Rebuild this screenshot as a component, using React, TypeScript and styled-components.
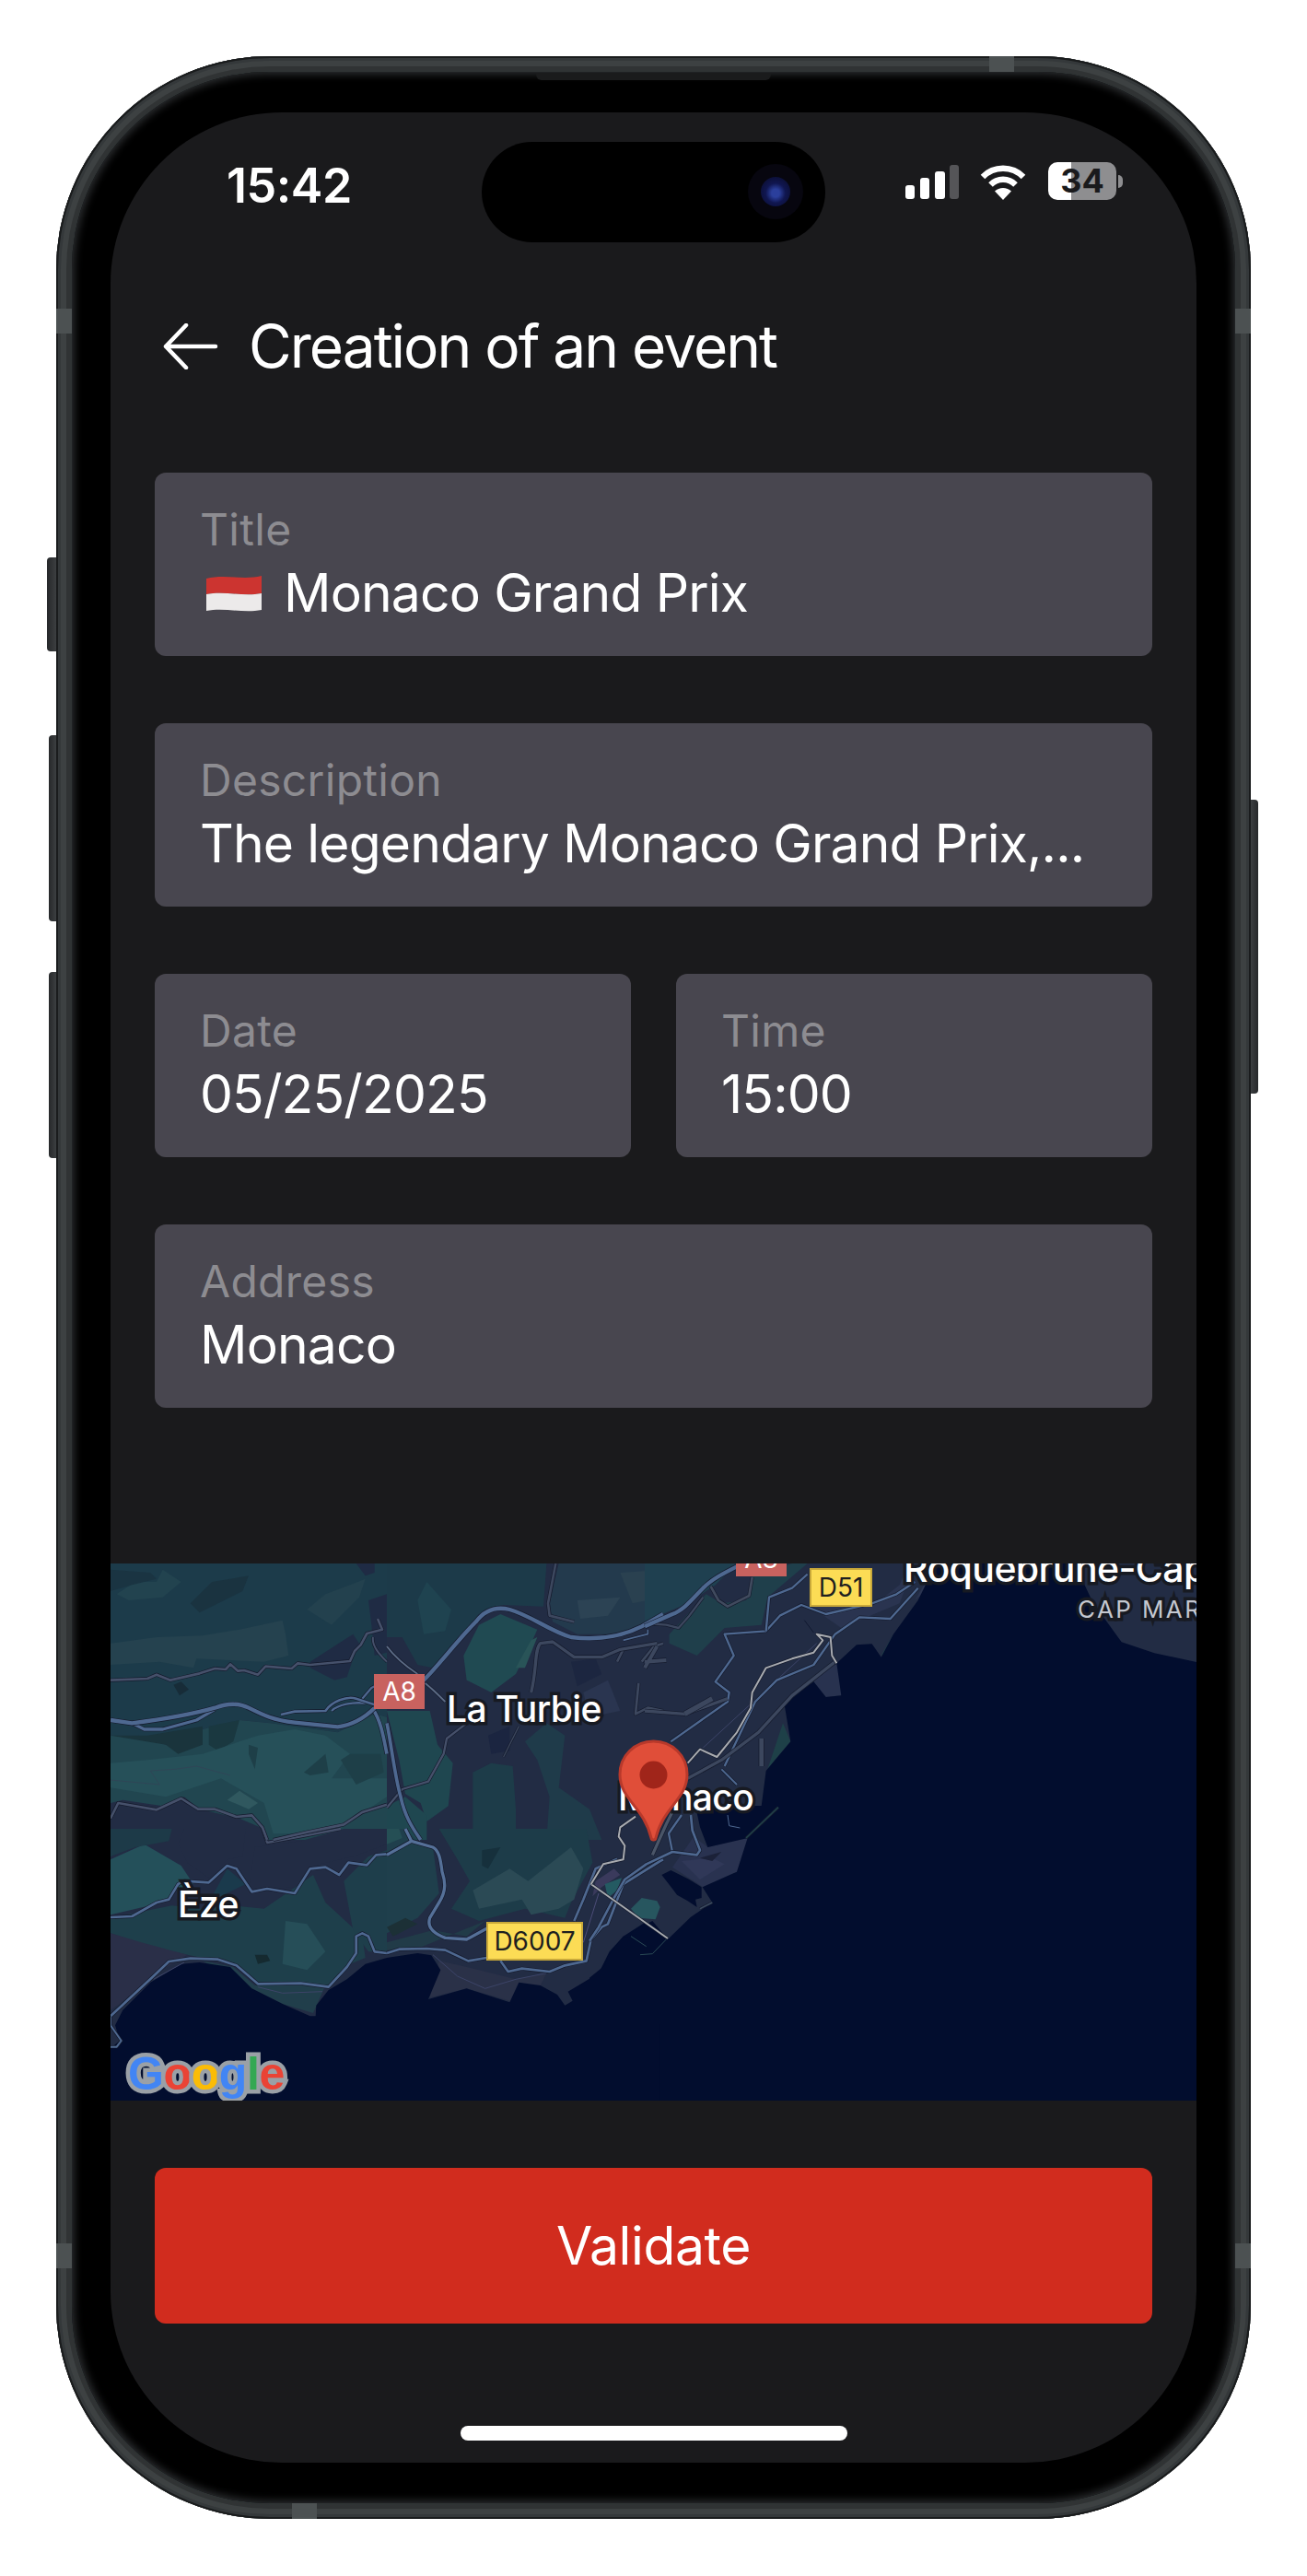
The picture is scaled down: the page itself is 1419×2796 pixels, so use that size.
import React from "react";
import styled, { createGlobalStyle } from "styled-components";

const Global = createGlobalStyle`
	html, body {
		margin: 0;
		padding: 0;
		background: #ffffff;
	}
	* {
		box-sizing: border-box;
	}
`;

const Page = styled.div`
	width: 1419px;
	height: 2796px;
	padding: 61px 61px 0;
	font-family: Inter, "Liberation Sans", sans-serif;
	overflow: hidden;
`;

const Phone = styled.div`
	position: relative;
	width: 1297px;
	height: 2673px;
	padding: 17px;
	border-radius: 232px;
	background: #2f3334;
	box-shadow: inset 0 0 0 2px #1a1c1d, inset 0 0 0 5px #34383a, inset 0 0 0 11px #3d4142, inset 0 0 0 15px #303334;
`;

const Bezel = styled.div`
	height: 100%;
	padding: 44px 42px;
	border-radius: 214px;
	background: #000000;
	box-shadow: inset 0 0 0 1px #1f2123, inset 0 0 9px 3px #2a2c2e;
`;

const SideButton = styled.span<{ $side: "left" | "right"; $top: number; $height: number; $width: number }>`
	position: absolute;
	top: ${(p) => p.$top}px;
	${(p) => p.$side}: -${(p) => p.$width}px;
	width: ${(p) => p.$width}px;
	height: ${(p) => p.$height}px;
	background: linear-gradient(${(p) => (p.$side === "left" ? "90deg" : "270deg")}, #26282a, #3c3f41);
	border-radius: ${(p) => (p.$side === "left" ? "4px 0 0 4px" : "0 4px 4px 0")};
`;

const Band = styled.span<{ $x: number; $y: number; $w: number; $h: number }>`
	position: absolute;
	left: ${(p) => p.$x}px;
	top: ${(p) => p.$y}px;
	width: ${(p) => p.$w}px;
	height: ${(p) => p.$h}px;
	background: #4c5152;
`;

const Speaker = styled.span`
	position: absolute;
	left: 521px;
	top: 18px;
	width: 255px;
	height: 8px;
	background: #1a1b1c;
	border-radius: 0 0 6px 6px;
`;

const Screen = styled.div`
	position: relative;
	height: 100%;
	display: flex;
	flex-direction: column;
	border-radius: 186px;
	background: #1a1a1c;
	overflow: hidden;
	color: #ffffff;
`;

const StatusBar = styled.div`
	height: 140px;
	padding: 57px 87px 0 126px;
	display: flex;
	justify-content: space-between;
	align-items: flex-start;
`;

const Clock = styled.span`
	font-size: 52px;
	line-height: 46px;
	font-weight: 600;
	letter-spacing: -0.5px;
`;

const StatusIcons = styled.div`
	display: flex;
	align-items: flex-start;
`;

const Battery = styled.div`
	position: relative;
	width: 74px;
	height: 41px;
	margin-left: 24px;
	margin-top: -3px;
	border-radius: 10px;
	background: linear-gradient(90deg, #ffffff 34%, #8e8e90 34%);
	color: #1a1a1c;
	font-size: 36px;
	line-height: 41px;
	font-weight: 700;
	text-align: center;
	&::after {
		content: "";
		position: absolute;
		left: 76px;
		top: 14px;
		width: 5px;
		height: 14px;
		border-radius: 0 6px 6px 0;
		background: #8e8e90;
	}
`;

const Island = styled.div`
	position: absolute;
	left: 403px;
	top: 32px;
	width: 373px;
	height: 109px;
	border-radius: 55px;
	background: #000000;
`;

const CameraRing = styled.span`
	position: absolute;
	right: 24px;
	top: 24px;
	width: 60px;
	height: 60px;
	border-radius: 50%;
	background: #07060f;
`;

const CameraLens = styled.span`
	position: absolute;
	left: 14px;
	top: 14px;
	width: 32px;
	height: 32px;
	border-radius: 50%;
	background: radial-gradient(circle at 50% 55%, #2b3f9c 0 18%, #101650 45%, #080a24 100%);
`;

const Header = styled.div`
	height: 100px;
	margin-top: 64px;
	padding-left: 57px;
	display: flex;
	align-items: center;
	gap: 33px;
`;

const HeaderTitle = styled.h1`
	margin: 0;
	font-size: 64px;
	line-height: 100px;
	font-weight: 400;
	letter-spacing: -2px;
`;

const Form = styled.div`
	margin-top: 87px;
	padding: 0 48px;
	display: flex;
	flex-direction: column;
	gap: 73px;
`;

const Field = styled.div`
	height: 199px;
	padding: 33px 30px 0 49px;
	border-radius: 12px;
	background: #48464f;
`;

const FieldLabel = styled.div`
	height: 64px;
	font-size: 48px;
	line-height: 58px;
	letter-spacing: 0.3px;
	color: #8d8c91;
`;

const FieldValue = styled.div`
	display: flex;
	align-items: center;
	gap: 24px;
	font-size: 57px;
	line-height: 68px;
	letter-spacing: -0.85px;
	color: #ffffff;
	white-space: nowrap;
`;

const FlagBox = styled.svg`
	flex: none;
	margin-left: 7px;
`;

const FieldRow = styled.div`
	display: grid;
	grid-template-columns: 1fr 1fr;
	gap: 49px;
`;

const MapArea = styled.div`
	position: relative;
	flex: none;
	height: 583px;
	margin-top: 169px;
	overflow: hidden;
	background: #020d2e;
`;

const MapDrawing = styled.svg`
	display: block;
	width: 100%;
	height: 100%;
`;

const MapPlace = styled.span<{ $x: number; $y: number; $size?: number; $small?: boolean }>`
	position: absolute;
	left: ${(p) => p.$x}px;
	top: ${(p) => p.$y}px;
	font-size: ${(p) => (p.$small ? 26 : p.$size ?? 39)}px;
	line-height: 46px;
	font-weight: ${(p) => (p.$small ? 400 : 500)};
	letter-spacing: ${(p) => (p.$small ? 2.4 : -0.6)}px;
	color: ${(p) => (p.$small ? "#c4c8d0" : "#ffffff")};
	white-space: nowrap;
	-webkit-text-stroke: 7px #171a22;
	paint-order: stroke fill;
`;

const RoadSign = styled.span<{ $x: number; $y: number; $w: number; $h: number; $kind: "motorway" | "dept" }>`
	position: absolute;
	left: ${(p) => p.$x}px;
	top: ${(p) => p.$y}px;
	width: ${(p) => p.$w}px;
	height: ${(p) => p.$h}px;
	display: flex;
	align-items: center;
	justify-content: center;
	font-size: 28px;
	background: ${(p) => (p.$kind === "motorway" ? "#c8625f" : "#fcdc55")};
	border: ${(p) => (p.$kind === "motorway" ? "0" : "2px solid #c9a93a")};
	color: ${(p) => (p.$kind === "motorway" ? "#ffffff" : "#1f1f1f")};
`;

const Pin = styled.svg`
	position: absolute;
	left: 551px;
	top: 191px;
	width: 77px;
	height: 111px;
`;

const GoogleLogo = styled.div`
	position: absolute;
	left: 19px;
	top: 524px;
	font-family: "Liberation Sans", Arial, sans-serif;
	font-size: 50px;
	line-height: 60px;
	font-weight: 700;
	letter-spacing: -0.4px;
	-webkit-text-stroke: 9px #9aa0a6;
	paint-order: stroke fill;
`;

const GoogleLetter = styled.span<{ $color: string }>`
	color: ${(p) => p.$color};
`;

const Footer = styled.div`
	margin-top: 73px;
	padding: 0 48px;
`;

const ValidateButton = styled.button`
	display: block;
	width: 100%;
	height: 169px;
	border: 0;
	border-radius: 12px;
	background: #d12c1e;
	color: #ffffff;
	font-family: inherit;
	font-size: 57px;
	font-weight: 400;
	letter-spacing: -0.4px;
`;

const HomeBar = styled.div`
	width: 420px;
	height: 16px;
	margin: 111px auto 0;
	border-radius: 8px;
	background: #ffffff;
`;

const BackArrow = () => (
	<svg width="60" height="50" viewBox="0 0 60 50" fill="none" stroke="#fff" strokeWidth="4.5" strokeLinecap="round" strokeLinejoin="round">
		<path d="M57 25H3M25 2 3 25l22 23" />
	</svg>
);

const SignalIcon = () => (
	<svg width="58" height="37" viewBox="0 0 58 37">
		<rect x="0" y="22" width="10" height="15" rx="3" fill="#fff" />
		<rect x="16" y="14" width="10" height="23" rx="3" fill="#fff" />
		<rect x="32" y="7" width="11" height="30" rx="3" fill="#fff" />
		<rect x="48" y="0" width="10" height="37" rx="3" fill="#555558" />
	</svg>
);

const WifiSvg = styled.svg`
	margin-left: 23px;
`;

const WifiIcon = () => (
	<WifiSvg width="50" height="38" viewBox="0 0 50 38">
		<path d="M3 13a31 31 0 0 1 44 0" fill="none" stroke="#fff" strokeWidth="6.5" />
		<path d="M11.5 21.5a19 19 0 0 1 27 0" fill="none" stroke="#fff" strokeWidth="6.5" />
		<path d="M25 38 16 28.5a13 13 0 0 1 18 0Z" fill="#fff" />
	</WifiSvg>
);

const MonacoFlag = () => (
	<FlagBox width="60" height="44" viewBox="0 0 60 44">
		<path d="M0 6c20-5 40 2 60-3v19c-20 4-40-3-60 1Z" fill="#cc3430" />
		<path d="M0 23c20-4 40 3 60-1v18c-20 4-40-3-60 1Z" fill="#eceaea" />
	</FlagBox>
);

// every shape below is written in the 3x coords of a crop of the map, dx/dy move it in place
const NAVY = "#222c44";
const ROAD = "#4e6890";
const MINOR = "#45506a";
const SOFT = "#3c475e";
const LIGHT = "#a8abb0";
const THIN = "#3c4468";

type Patch = [string, string];
type Road = [string, string, number];
type Crop = { dx: number; dy: number; patches: Patch[]; roads: Road[] };

const crops: Crop[] = [
	{
		dx: 900,
		dy: 0,
		patches: [
			["0,0 520,0 510,140 380,135 320,150 240,230 150,340 100,330 50,240 0,240", "#1c3a49"],
			["130,60 210,150 190,220 120,230 100,120", "#1f4350"],
			["560,0 900,0 900,160 790,230 620,230 540,190 530,130", "#233a4d"],
			["620,120 760,110 720,170 630,180", "#2c4354"],
			["760,30 900,20 900,110 800,130", "#2a4150"],
			["250,300 300,200 370,165 490,215 470,260 420,360 340,420 260,380", "#204a52"],
			["420,340 470,250 490,240 450,340", "#295458"],
			["0,480 140,480 165,590 215,650 200,790 130,840 110,780 60,750 40,640", "#1f4750"],
			["0,790 60,760 130,820 130,900 0,900", "#1f4750"],
			["280,900 280,680 340,650 410,660 420,800 420,900", "#1d3c49"],
			["450,580 520,520 580,560 560,730 660,800 700,900 520,900 530,760 490,640", "#1f3b4a"],
			["640,420 720,380 760,480 660,500", "#2a3550"],
			["330,560 400,530 400,610 340,620", "#1b2540"],
			["600,320 680,310 700,360 620,400", "#1c2640"],
		],
		roads: [
			["M120 380C170 330 230 250 290 190 320 150 360 140 400 150 470 170 530 220 600 240 680 250 760 240 830 205L900 165", ROAD, 13],
			["M0 520C15 590 25 690 45 760 60 830 90 870 110 900", ROAD, 11],
			["M550 0 525 130 530 170 610 190", SOFT, 8],
			["M0 270C30 310 70 340 100 360M125 390C150 410 170 430 190 450", "#5c6b85", 6],
			["M0 795 50 735 135 710 185 620 195 570 260 520", MINOR, 7],
			["M470 420C490 340 480 280 500 260L540 255 610 305 700 305 760 280 880 260", SOFT, 10],
			["M750 320 770 280M830 320 870 270 900 260M820 390 810 490 850 470 900 480", SOFT, 8],
			["M380 630 430 530", SOFT, 4],
			["M770 250 850 230 850 215", ROAD, 5],
		],
	},
	{
		dx: 0,
		dy: 0,
		patches: [
			["0,0 900,0 900,500 860,490 740,550 520,520 420,510 300,540 180,590 90,560 0,560", "#1c3b4a"],
			["0,260 150,240 300,235 420,215 560,185 570,230 580,300 500,320 280,310 270,340 160,320 0,330", "#25424f"],
			["20,100 80,60 150,60 170,20 230,60 170,110 60,120", "#22434f"],
			["640,150 700,100 780,70 830,50 810,110 720,200", "#23414e"],
			["260,130 330,60 450,40 430,90 290,160", "#1a3340"],
			["0,20 130,30 150,50 70,70 0,90", "#1a3442"],
			["650,320 790,230 810,260 790,310 770,370 730,380 650,340", "#1f2b44"],
			["800,0 860,0 860,30 830,40", "#1f2b44"],
			["840,120 900,100 900,290 860,300 850,200", "#1f2b44"],
			["205,395 230,385 255,410 225,430", "#172c38"],
			["0,560 90,560 180,590 300,540 420,510 520,520 740,550 860,490 900,500 900,900 0,900", "#214650"],
			["0,560 180,590 220,620 300,590 300,530 120,560", "#1a343c"],
			["320,530 420,510 400,580 350,610 320,590", "#1a3840"],
			["0,650 120,640 300,620 480,560 600,540 700,560 780,620 720,700 900,700 900,760 720,880 530,880 500,780 360,700 180,760 0,730", "#265059"],
			["380,770 420,740 480,780 450,800", "#30585f"],
			["630,680 700,620 710,680 650,690", "#1e3f48"],
			["450,590 480,600 470,670 450,620", "#1e3f48"],
			["750,640 780,620 880,620 890,680 800,720", "#1e3f48"],
			["0,780 40,770 170,790 240,760 290,800 420,830 490,860 510,900 0,900", NAVY],
		],
		roads: [
			["M0 510 70 520C150 510 270 490 340 470 380 455 420 455 450 470 500 495 530 510 600 518L740 532C790 525 830 500 860 470", ROAD, 13],
			["M70 520 110 540 170 540 280 510 340 475", ROAD, 10],
			["M555 492 600 482 700 480C720 450 770 430 800 440L860 460", ROAD, 8],
			["M720 480C740 460 790 450 830 455M820 440 850 405 860 400", ROAD, 7],
			["M855 475C880 510 890 570 900 620", ROAD, 11],
			["M0 380 120 375 150 362 195 380 290 358 340 342 375 345 390 328 415 350 435 348 480 362 505 335 590 342 610 325 650 330 780 318 795 285 815 265 835 228 885 215 870 180", MINOR, 8],
			["M855 240C850 270 880 300 900 320", MINOR, 6],
			["M0 830 25 780 150 802 230 765 285 800 340 800 410 825 460 820 495 860 510 900", MINOR, 8],
			["M530 900 640 875 760 850 820 810 900 785", MINOR, 8],
			["M130 675 210 670 280 660 390 690M130 675 160 720 0 705", "#2f4657", 3],
		],
	},
	{
		dx: 0,
		dy: 864,
		patches: [
			["0,100 110,50 230,120 270,180 210,200 170,240 0,280", "#24505a"],
			["0,290 200,250 290,260 400,250 500,260 660,150 700,240 820,350 830,420 780,440 710,510 470,500 400,440 250,410 120,380 0,340", "#1e3f4b"],
			["570,300 640,310 700,400 640,460 560,440", "#264e58"],
			["240,0 440,0 430,90 380,100 320,160 250,110 220,50", NAVY],
			["0,0 200,0 190,40 80,60 0,90", "#1d3a48"],
			["470,60 620,40 760,0 900,0 900,50 790,90 660,120 600,190 450,200", NAVY],
			["760,170 840,90 900,70 900,400 840,400 790,330", "#1e3e4b"],
			["0,340 100,370 250,410 150,470 30,570 0,590", "#2a2f48"],
			["300,430 400,450 470,510 700,510 660,600 560,570 460,520", "#213e4b"],
			["470,410 510,410 520,430 480,440", "#152a30"],
			["380,130 440,180 320,240", "#1a3a4c"],
		],
		roads: [
			["M0 288 70 285 150 240 190 230 220 180 240 170 320 175 380 120 410 130 460 205 510 195 600 210 650 130 700 125 745 150 775 110 835 118 865 85 900 82", ROAD, 8],
			["M0 610 150 470 190 432 260 422 350 425 410 445 480 505 620 503 710 515 770 450 800 405 800 350 820 340 840 350 860 400 900 405", ROAD, 8],
			["M0 610 0 640 35 690 20 710 0 710", ROAD, 6],
			["M495 0 510 45 620 25 750 0", MINOR, 7],
			["M140 490 240 435M480 515 560 535 690 530", THIN, 3],
		],
	},
	{
		dx: 900,
		dy: 864,
		patches: [
			["170,0 400,0 500,0 650,0 670,110 600,240 580,290 450,260 300,300 210,260 270,170 230,100", "#1d3c49"],
			["280,200 400,130 460,170 600,60 640,130 610,230 560,260 470,280 440,230 300,260", "#2b4a55"],
			["0,0 60,0 100,40 150,60 170,210 100,290 0,340", "#1f3f4c"],
			["0,320 60,290 100,310 20,350", "#1c3036"],
			["0,370 150,330 260,350 320,300 100,390 0,395", "#213b48"],
			["0,0 40,0 50,30 0,50", "#254f55"],
			["310,70 370,60 330,130 310,120", "#16303c"],
			["680,170 740,130 760,150 700,190 670,220", "#3a3a5c"],
			["710,180 765,160 750,200 720,225", "#245a62"],
			["170,430 260,450 420,490 520,470 500,510 400,560 260,520 140,550", "#2a3148"],
		],
		roads: [
			["M0 85 80 40 60 0M80 40 150 60C170 70 175 100 180 140 190 170 195 200 170 240L140 290C130 320 150 340 190 355L260 360 325 325", "#557098", 10],
			["M0 405 40 392 130 390 190 395 265 430 325 420", ROAD, 8],
			["M370 430 395 465 440 455 530 465 580 445 650 430 665 360 700 320 720 310 770 180 890 105 900 100", ROAD, 8],
			["M610 300 640 230 680 130 750 98", ROAD, 8],
			["M150 410 230 480 320 520 420 490 520 470", THIN, 3],
			["M640 370 690 210", "#4c4c78", 3],
		],
	},
	{
		dx: 1740,
		dy: 0,
		patches: [
			["0,0 300,0 230,70 140,130 0,190", "#1f4050"],
			["80,230 200,100 250,130 330,120 350,40 480,0 530,0 400,110 380,200 260,210 170,300 80,260", "#1f3f4b"],
			["540,140 740,140 830,70 860,0 880,0 830,130 640,210", "#2a3450"],
			["400,670 430,580 450,520 475,580 440,620", "#1e4048"],
			["770,300 810,230 790,290", "#1e4048"],
			["550,385 610,330 630,330 640,430 590,435", "#28324f"],
			["880,120 950,0 949,60", "#2a3450"],
		],
		roads: [
			["M0 480 130 490 270 440", SOFT, 10],
			["M130 490 220 440", SOFT, 16],
			["M0 340 40 270M0 320 70 315", SOFT, 12],
			["M140 700 250 640 370 550 480 430 620 320", SOFT, 10],
			["M380 570 380 660", SOFT, 14],
			["M0 205 90 165C130 150 160 110 190 80 220 50 260 30 300 10L340 0", ROAD, 13],
			["M215 75 240 120 270 140 340 105 350 45", "#404a5e", 8],
			["M0 195 70 200 110 210 145 170 190 110", SOFT, 7],
			["M85 580 270 450 275 420 230 385 290 300 260 230 395 220 440 170 510 135 590 165 740 130 820 100 880 60", ROAD, 7],
			["M395 220 405 110 480 80 530 35", ROAD, 7],
			["M260 660 360 450 430 380 550 330 620 230 700 175 800 180 890 80", ROAD, 7],
			["M250 670 300 720", ROAD, 6],
			["M520 185 550 225", "#101830", 3],
			["M190 600 560 260", THIN, 3],
			["M140 650 180 605 235 630 300 550 345 470 350 420 395 340 480 310 550 290 580 250 560 230 605 240 610 300 625 325", LIGHT, 6],
		],
	},
	{
		dx: 1560,
		dy: 789,
		patches: [
			["385,135 515,105 480,215 370,265 270,200 340,100", "#293250"],
			["300,180 400,170 440,190 360,240", "#303858"],
			["360,170 430,150 400,180", "#1b2138"],
			["135,335 170,300 220,310 230,330 215,370 160,365", "#27565f"],
		],
		roads: [
			["M0 440 30 395 80 300 115 240 185 190 270 150 350 160 360 145 335 80 330 30", ROAD, 8],
			["M270 150 258 90 300 30", ROAD, 7],
			["M205 160 250 60 270 20", "#4a5568", 10],
			["M135 425 185 458M165 485 205 482 250 435", "#2a4a55", 3],
			["M400 315 360 335", "#3a4a60", 5],
			["M510 105 615 5", "#1f3f48", 5],
			["M450 30 455 65 490 72", ROAD, 3],
			["M5 255 255 432", LIGHT, 6],
			["M5 255 45 190 110 175 115 130 95 100 100 70 150 35", LIGHT, 6],
		],
	},
];

const seas: { dx: number; dy: number; points: string }[] = [
	{
		dx: 0,
		dy: 864,
		points: "0,715 30,690 15,640 40,590 130,500 230,440 290,435 390,450 460,520 560,570 650,610 668,610 670,575 710,525 770,490 830,440 900,420 900,900 0,900",
	},
	{
		dx: 900,
		dy: 864,
		points: "0,420 100,405 145,412 175,460 135,555 260,520 400,565 430,500 500,510 555,540 580,575 605,560 590,530 690,470 725,400 770,350 840,305 900,350 900,900 0,900",
	},
	{
		dx: 1740,
		dy: 0,
		points: "949,0 1400,0 1459,126 1553,256 1660,292 1797,321 1797,1749 300,1749 380,790 395,675 475,580 455,460 510,415 550,385 590,435 640,430 625,325 690,265 740,262 770,305 810,230 890,120",
	},
	{
		dx: 1560,
		dy: 789,
		points: "0,560 50,520 60,490 110,425 130,430 140,410 205,375 255,435 330,362 400,315 368,265 480,215 515,105 385,135 360,70 345,0 720,0 720,720 0,720",
	},
	{
		dx: 1560,
		dy: 789,
		points: "235,225 265,210 325,240 365,265 365,300 345,305 350,330 320,310 285,290 270,270",
	},
	{
		dx: 0,
		dy: 0,
		points: "1790,1500 2100,1500 2100,1749 1790,1749",
	},
];

const allRoads = crops
	.flatMap((c) => c.roads.map(([d, color, width]) => ({ d, color, width, dx: c.dx, dy: c.dy })))
	.sort((a, b) => (a.color === LIGHT ? 100 : a.width) - (b.color === LIGHT ? 100 : b.width));

const MapTerrain = () => (
	<MapDrawing viewBox="0 0 3537 1749" preserveAspectRatio="none">
		<rect width="3537" height="1749" fill={NAVY} />
		{crops.map((c) => (
			<g key={`${c.dx}-${c.dy}`} transform={`translate(${c.dx} ${c.dy})`}>
				{c.patches.map(([pts, fill]) => (
					<polygon key={pts} points={pts} fill={fill} />
				))}
			</g>
		))}
		{seas.map((s) => (
			<polygon key={s.points} points={s.points} fill="#020d2e" transform={`translate(${s.dx} ${s.dy})`} />
		))}
		{allRoads.map((r) => (
			<g key={r.d} transform={`translate(${r.dx} ${r.dy})`} fill="none" strokeLinejoin="round">
				{r.width > 3 && <path d={r.d} stroke="#151b2d" strokeWidth={r.width + 4} />}
				<path d={r.d} stroke={r.color} strokeWidth={r.width} />
			</g>
		))}
	</MapDrawing>
);

const MapPin = () => (
	<Pin viewBox="0 0 77 111">
		<path
			d="M38.5 2C18 2 2 18 2 38c0 27 26 35 34 69 .5 2.600 4.500 2.600 5 0C49 73 75 65 75 38 75 18 59 2 38.500 2Z"
			fill="#e04e39"
			stroke="#b8392b"
			strokeWidth="3"
		/>
		<circle cx="38.500" cy="38.500" r="15" fill="#a0251a" />
	</Pin>
);

const App = () => {
	return (
		<Page>
			<Global />
			<Phone>
				<SideButton $side="left" $top={544} $height={102} $width={10} />
				<SideButton $side="left" $top={737} $height={202} $width={8} />
				<SideButton $side="left" $top={994} $height={202} $width={8} />
				<SideButton $side="right" $top={807} $height={319} $width={8} />
				<Band $x={0} $y={274} $w={17} $h={27} />
				<Band $x={1280} $y={274} $w={17} $h={27} />
				<Band $x={1013} $y={0} $w={27} $h={17} />
				<Band $x={0} $y={2374} $w={17} $h={27} />
				<Band $x={1280} $y={2374} $w={17} $h={27} />
				<Band $x={256} $y={2656} $w={27} $h={17} />
				<Speaker />
				<Bezel>
					<Screen>
						<Island>
							<CameraRing>
								<CameraLens />
							</CameraRing>
						</Island>
						<StatusBar>
							<Clock>15:42</Clock>
							<StatusIcons>
								<SignalIcon />
								<WifiIcon />
								<Battery>34</Battery>
							</StatusIcons>
						</StatusBar>
						<Header>
							<BackArrow />
							<HeaderTitle>Creation of an event</HeaderTitle>
						</Header>
						<Form>
							<Field>
								<FieldLabel>Title</FieldLabel>
								<FieldValue>
									<MonacoFlag />
									Monaco Grand Prix
								</FieldValue>
							</Field>
							<Field>
								<FieldLabel>Description</FieldLabel>
								<FieldValue>The legendary Monaco Grand Prix,...</FieldValue>
							</Field>
							<FieldRow>
								<Field>
									<FieldLabel>Date</FieldLabel>
									<FieldValue>05/25/2025</FieldValue>
								</Field>
								<Field>
									<FieldLabel>Time</FieldLabel>
									<FieldValue>15:00</FieldValue>
								</Field>
							</FieldRow>
							<Field>
								<FieldLabel>Address</FieldLabel>
								<FieldValue>Monaco</FieldValue>
							</Field>
						</Form>
						<MapArea>
							<MapTerrain />
							<RoadSign $kind="motorway" $x={286} $y={120} $w={55} $h={38}>A8</RoadSign>
							<RoadSign $kind="motorway" $x={679} $y={-24} $w={55} $h={38}>A8</RoadSign>
							<RoadSign $kind="dept" $x={408} $y={389} $w={105} $h={42}>D6007</RoadSign>
							<RoadSign $kind="dept" $x={759} $y={5} $w={68} $h={42}>D51</RoadSign>
							<MapPlace $x={365} $y={135}>La Turbie</MapPlace>
							<MapPlace $x={73} $y={347}>Èze</MapPlace>
							<MapPlace $x={551} $y={231}>Monaco</MapPlace>
							<MapPlace $x={861} $y={-18} $size={41}>Roquebrune-Cap-Martin</MapPlace>
							<MapPlace $x={1050} $y={27} $small>CAP MARTIN</MapPlace>
							<MapPin />
							<GoogleLogo>
								<GoogleLetter $color="#4285f4">G</GoogleLetter>
								<GoogleLetter $color="#ea4335">o</GoogleLetter>
								<GoogleLetter $color="#fbbc05">o</GoogleLetter>
								<GoogleLetter $color="#4285f4">g</GoogleLetter>
								<GoogleLetter $color="#34a853">l</GoogleLetter>
								<GoogleLetter $color="#ea4335">e</GoogleLetter>
							</GoogleLogo>
						</MapArea>
						<Footer>
							<ValidateButton>Validate</ValidateButton>
						</Footer>
						<HomeBar />
					</Screen>
				</Bezel>
			</Phone>
		</Page>
	);
};

export default App;
